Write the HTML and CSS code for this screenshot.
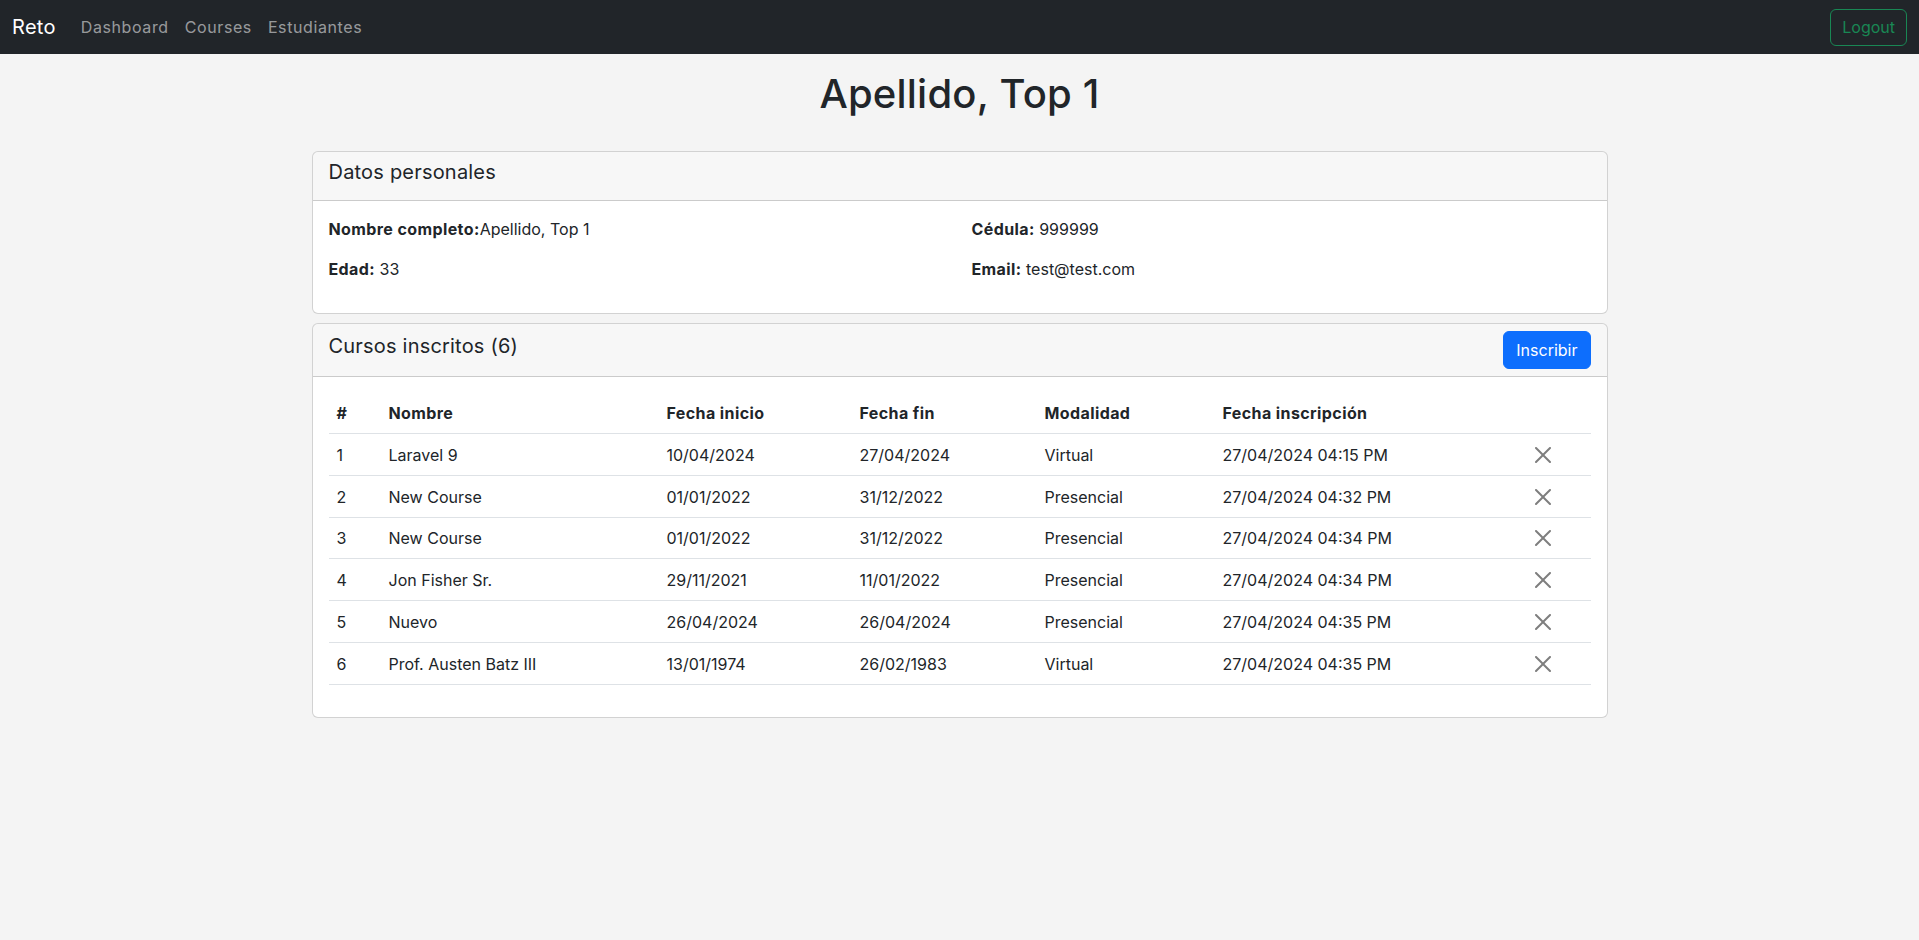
FILE: index.html
```html
<!DOCTYPE html>
<html lang="es">
<head>
<meta charset="utf-8">
<title>Apellido, Top 1</title>
<link rel="stylesheet" href="styles.css">
</head>
<body>
<nav class="navbar">
  <div class="nav-left">
    <a class="brand" href="#">Reto</a>
    <ul class="nav-links">
      <li><a href="#">Dashboard</a></li>
      <li><a href="#">Courses</a></li>
      <li><a href="#">Estudiantes</a></li>
    </ul>
  </div>
  <button class="btn btn-logout" type="button">Logout</button>
</nav>

<main class="container">
  <h1 class="page-title">Apellido, Top 1</h1>

  <section class="card">
    <div class="card-header">
      <h5 class="card-title">Datos personales</h5>
    </div>
    <div class="card-body info-grid">
      <div class="info-col">
        <p><strong>Nombre completo:</strong>Apellido, Top 1</p>
        <p><strong>Edad:</strong> 33</p>
      </div>
      <div class="info-col">
        <p><strong>Cédula:</strong> 999999</p>
        <p><strong>Email:</strong> test@test.com</p>
      </div>
    </div>
  </section>

  <section class="card card-courses">
    <div class="card-header header-flex">
      <h5 class="card-title">Cursos inscritos (6)</h5>
      <button class="btn btn-primary" type="button">Inscribir</button>
    </div>
    <div class="card-body">
      <table class="courses">
        <colgroup>
          <col class="c-num"><col class="c-name"><col class="c-start"><col class="c-end"><col class="c-mode"><col class="c-date"><col class="c-act">
        </colgroup>
        <thead>
          <tr><th>#</th><th>Nombre</th><th>Fecha inicio</th><th>Fecha fin</th><th>Modalidad</th><th>Fecha inscripción</th><th></th></tr>
        </thead>
        <tbody>
          <tr><td>1</td><td>Laravel 9</td><td>10/04/2024</td><td>27/04/2024</td><td>Virtual</td><td>27/04/2024 04:15 PM</td><td class="act"><button class="btn-close" type="button" aria-label="Eliminar"><svg viewBox="0 0 16 16"><path d="M.293.293a1 1 0 0 1 1.414 0L8 6.586 14.293.293a1 1 0 1 1 1.414 1.414L9.414 8l6.293 6.293a1 1 0 0 1-1.414 1.414L8 9.414l-6.293 6.293a1 1 0 0 1-1.414-1.414L6.586 8 .293 1.707a1 1 0 0 1 0-1.414z"/></svg></button></td></tr>
          <tr><td>2</td><td>New Course</td><td>01/01/2022</td><td>31/12/2022</td><td>Presencial</td><td>27/04/2024 04:32 PM</td><td class="act"><button class="btn-close" type="button" aria-label="Eliminar"><svg viewBox="0 0 16 16"><path d="M.293.293a1 1 0 0 1 1.414 0L8 6.586 14.293.293a1 1 0 1 1 1.414 1.414L9.414 8l6.293 6.293a1 1 0 0 1-1.414 1.414L8 9.414l-6.293 6.293a1 1 0 0 1-1.414-1.414L6.586 8 .293 1.707a1 1 0 0 1 0-1.414z"/></svg></button></td></tr>
          <tr><td>3</td><td>New Course</td><td>01/01/2022</td><td>31/12/2022</td><td>Presencial</td><td>27/04/2024 04:34 PM</td><td class="act"><button class="btn-close" type="button" aria-label="Eliminar"><svg viewBox="0 0 16 16"><path d="M.293.293a1 1 0 0 1 1.414 0L8 6.586 14.293.293a1 1 0 1 1 1.414 1.414L9.414 8l6.293 6.293a1 1 0 0 1-1.414 1.414L8 9.414l-6.293 6.293a1 1 0 0 1-1.414-1.414L6.586 8 .293 1.707a1 1 0 0 1 0-1.414z"/></svg></button></td></tr>
          <tr><td>4</td><td>Jon Fisher Sr.</td><td>29/11/2021</td><td>11/01/2022</td><td>Presencial</td><td>27/04/2024 04:34 PM</td><td class="act"><button class="btn-close" type="button" aria-label="Eliminar"><svg viewBox="0 0 16 16"><path d="M.293.293a1 1 0 0 1 1.414 0L8 6.586 14.293.293a1 1 0 1 1 1.414 1.414L9.414 8l6.293 6.293a1 1 0 0 1-1.414 1.414L8 9.414l-6.293 6.293a1 1 0 0 1-1.414-1.414L6.586 8 .293 1.707a1 1 0 0 1 0-1.414z"/></svg></button></td></tr>
          <tr><td>5</td><td>Nuevo</td><td>26/04/2024</td><td>26/04/2024</td><td>Presencial</td><td>27/04/2024 04:35 PM</td><td class="act"><button class="btn-close" type="button" aria-label="Eliminar"><svg viewBox="0 0 16 16"><path d="M.293.293a1 1 0 0 1 1.414 0L8 6.586 14.293.293a1 1 0 1 1 1.414 1.414L9.414 8l6.293 6.293a1 1 0 0 1-1.414 1.414L8 9.414l-6.293 6.293a1 1 0 0 1-1.414-1.414L6.586 8 .293 1.707a1 1 0 0 1 0-1.414z"/></svg></button></td></tr>
          <tr><td>6</td><td>Prof. Austen Batz III</td><td>13/01/1974</td><td>26/02/1983</td><td>Virtual</td><td>27/04/2024 04:35 PM</td><td class="act"><button class="btn-close" type="button" aria-label="Eliminar"><svg viewBox="0 0 16 16"><path d="M.293.293a1 1 0 0 1 1.414 0L8 6.586 14.293.293a1 1 0 1 1 1.414 1.414L9.414 8l6.293 6.293a1 1 0 0 1-1.414 1.414L8 9.414l-6.293 6.293a1 1 0 0 1-1.414-1.414L6.586 8 .293 1.707a1 1 0 0 1 0-1.414z"/></svg></button></td></tr>
        </tbody>
      </table>
    </div>
  </section>
</main>
</body>
</html>
```

FILE: styles.css
```css
* { box-sizing: border-box; }

html, body {
  margin: 0;
  padding: 0;
}

body {
  background: #f4f4f4;
  color: #212529;
  font-family: "Inter", "Open Sans", "Liberation Sans", sans-serif;
  font-size: 16px;
  line-height: 1.5;
}

a { text-decoration: none; }

/* Navbar */
.navbar {
  background: #212529;
  display: flex;
  align-items: center;
  justify-content: space-between;
  padding: 8px 12px;
  height: 54px;
}

.nav-left {
  display: flex;
  align-items: center;
}

.brand {
  color: #fff;
  font-size: 20px;
  line-height: 30px;
  padding: 5px 0;
  margin-right: 17px;
  letter-spacing: 0.3px;
}

.nav-links {
  list-style: none;
  margin: 0;
  padding: 0;
  display: flex;
}

.nav-links a {
  display: block;
  color: rgba(255, 255, 255, 0.55);
  padding: 8px 8px;
  font-size: 16px;
  line-height: 24px;
  letter-spacing: 0.6px;
}

.btn {
  font-family: inherit;
  font-size: 16px;
  line-height: 24px;
  padding: 6px 12px;
  border-radius: 6px;
  cursor: pointer;
}

.btn-logout {
  background: transparent;
  color: #198754;
  border: 1px solid #198754;
  height: 37px;
  padding: 5px 11px;
}

.btn-primary {
  background: #0d6efd;
  color: #fff;
  border: 1px solid #0d6efd;
}

/* Layout */
.container {
  width: 1320px;
  margin: 0 auto;
  padding: 0 12px;
}

.page-title {
  text-align: center;
  font-size: 40px;
  line-height: 48px;
  font-weight: 500;
  margin: 16px 0 33px;
  letter-spacing: 0.2px;
}

/* Cards */
.card {
  background: #fff;
  border: 1px solid rgba(0, 0, 0, 0.175);
  border-radius: 6px;
  overflow: hidden;
}

.card-courses {
  margin-top: 9px;
}

.card-header {
  background: rgba(0, 0, 0, 0.03);
  border-bottom: 1px solid rgba(0, 0, 0, 0.175);
  padding: 8px 16px;
}

.card-title {
  margin: 0 0 8px;
  font-size: 20px;
  line-height: 24px;
  font-weight: 400;
  letter-spacing: 0.2px;
}

.header-flex {
  display: flex;
  justify-content: space-between;
  padding: 7px 16px;
}

.header-flex .card-title {
  margin-top: 3px;
}

.card-body {
  padding: 16px;
}

.info-grid {
  display: grid;
  grid-template-columns: 643px 1fr;
}

.info-col p {
  margin: 0 0 16px;
}

.info-col strong {
  font-weight: 700;
  letter-spacing: 0.4px;
}

/* Table */
.courses {
  width: 100%;
  border-collapse: collapse;
  margin-bottom: 16px;
  table-layout: fixed;
}

.c-num { width: 52px; }
.c-name { width: 278px; }
.c-start { width: 193px; }
.c-end { width: 185px; }
.c-mode { width: 178px; }
.c-date { width: 280px; }
.c-act { width: 96px; }

.courses th,
.courses td {
  text-align: left;
  padding: 8px;
  border-bottom: 1px solid #dee2e6;
  line-height: 24px;
  vertical-align: middle;
}

.courses th {
  font-weight: 700;
  letter-spacing: 0.4px;
}

.courses td {
  padding-top: 8.8px;
}

.courses td.act {
  text-align: center;
}

.btn-close {
  display: block;
  margin: 0 auto;
  width: 24px;
  height: 24px;
  padding: 4px;
  border: 0;
  background: transparent;
  opacity: 0.5;
  cursor: pointer;
}

.btn-close svg {
  display: block;
  width: 16px;
  height: 16px;
  fill: #000;
}
```
